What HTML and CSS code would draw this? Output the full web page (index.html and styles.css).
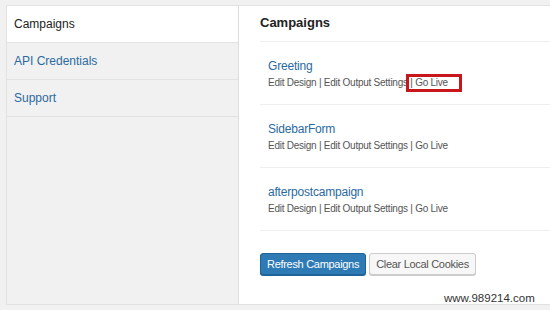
FILE: index.html
```html
<html lang="en">
<head>
    <meta charset="UTF-8">
    <title>Campaigns</title>
    <link rel="stylesheet" href="styles.css">
</head>
<body>
    <div class="wrap">
        <ul class="side-nav">
            <li class="active">Campaigns</li>
            <li><a href="#">API Credentials</a></li>
            <li><a href="#">Support</a></li>
        </ul>

        <div class="main">
            <h2>Campaigns</h2>

            <div class="campaign">
                <a href="#" class="campaign-name">Greeting</a>
                <div class="actions">Edit Design | Edit Output Settings <span class="highlight">| Go Live</span></div>
            </div>
            <div class="campaign">
                <a href="#" class="campaign-name">SidebarForm</a>
                <div class="actions">Edit Design | Edit Output Settings | Go Live</div>
            </div>
            <div class="campaign">
                <a href="#" class="campaign-name">afterpostcampaign</a>
                <div class="actions">Edit Design | Edit Output Settings | Go Live</div>
            </div>

            <div class="button-row">
                <button class="btn btn-primary">Refresh Campaigns</button>
                <button class="btn">Clear Local Cookies</button>
            </div>
        </div>
    </div>

    <div class="watermark">www.989214.com</div>
</body>
</html>
```

FILE: styles.css
```css
body {
    margin: 0;
    padding: 5px 0 0 6px;
    background: #f1f1f1;
    font-family: 'Liberation Sans', Arial, sans-serif;
    color: #222;
    height: 310px;
    box-sizing: border-box;
    overflow: hidden;
}
.wrap {
    display: flex;
    height: 300px;
    border: 1px solid #e2e2e2;
    border-right: none;
    box-sizing: border-box;
}
.side-nav {
    list-style: none;
    margin: 0;
    padding: 0;
    width: 231px;
    background: #f1f1f1;
    border-right: 1px solid #dedede;
}
.side-nav li {
    height: 36px;
    line-height: 36px;
    padding-left: 7px;
    font-size: 12px;
    border-bottom: 1px solid #e2e2e2;
}
.side-nav li.active {
    background: #fff;
    color: #222;
}
.side-nav a {
    color: #2b6aa0;
    text-decoration: none;
}
.main {
    flex: 1;
    background: #fff;
    padding-left: 21px;
}
.main h2 {
    margin: 0;
    height: 35px;
    line-height: 34px;
    font-size: 13px;
    font-weight: bold;
    color: #222;
    border-bottom: 1px solid #eeeeee;
}
.campaign {
    padding: 15px 0 13px 8px;
    border-bottom: 1px solid #eeeeee;
}
.campaign-name {
    display: block;
    font-size: 12px;
    letter-spacing: -0.2px;
    line-height: 18px;
    color: #2b6aa0;
    text-decoration: none;
}
.actions {
    font-size: 10px;
    letter-spacing: -0.25px;
    line-height: 16px;
    color: #555;
}
.highlight {
    position: relative;
}
.highlight::after {
    content: "";
    position: absolute;
    left: -4px;
    top: -3px;
    width: 50px;
    height: 12px;
    border: 3px solid #c8161d;
}
.button-row {
    display: flex;
    gap: 3px;
    padding-top: 22px;
}
.btn {
    height: 22px;
    padding: 0 6px;
    font-family: 'Liberation Sans', Arial, sans-serif;
    font-size: 11px;
    letter-spacing: -0.3px;
    color: #555;
    background: #f7f7f7;
    border: 1px solid #cccccc;
    border-radius: 3px;
    box-shadow: 0 1px 0 #cccccc;
}
.btn-primary {
    color: #fff;
    background: #2d7ab5;
    border-color: #1f6399;
    box-shadow: 0 1px 0 #1f6399;
}
.watermark {
    position: absolute;
    left: 444px;
    top: 292px;
    font-size: 11.5px;
    color: #333;
}
```
